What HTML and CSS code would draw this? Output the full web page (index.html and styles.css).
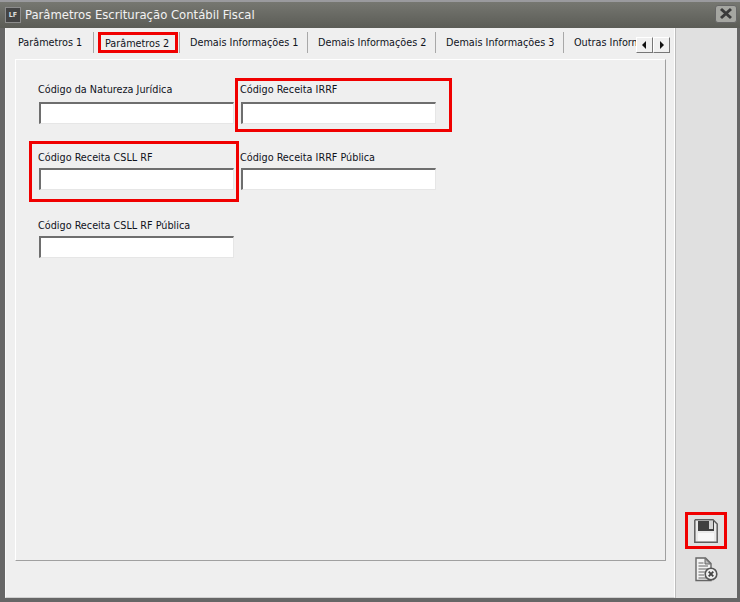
FILE: index.html
```html
<!DOCTYPE html>
<html lang="pt">
<head>
<meta charset="utf-8">
<title>Parâmetros Escrituração Contábil Fiscal</title>
<link rel="stylesheet" href="styles.css">
</head>
<body>
<div class="window">
  <header class="titlebar">
    <span class="appicon">LF</span>
    <span class="title">Parâmetros Escrituração Contábil Fiscal</span>
    <button class="close" aria-label="Fechar">
      <svg width="16" height="13" viewBox="0 0 16 13"><path d="M3 2 L13 11 M13 2 L3 11" stroke="#3a3a3a" stroke-width="3" fill="none"/></svg>
    </button>
  </header>
  <div class="content">
    <main class="main">
      <div class="tabstrip">
        <nav class="tabs">
          <span class="tab tab-first">Parâmetros 1</span>
          <span class="tab tab-active">Parâmetros 2</span>
          <span class="tab">Demais Informações 1</span>
          <span class="tab">Demais Informações 2</span>
          <span class="tab">Demais Informações 3</span>
          <span class="tab tab-last">Outras Informações</span>
        </nav>
        <div class="scroller">
          <span class="scroll-btn"><svg width="5" height="8" viewBox="0 0 5 8"><path d="M4 0V8L0 4Z" fill="#111"/></svg></span>
          <span class="scroll-btn"><svg width="5" height="8" viewBox="0 0 5 8"><path d="M1 0V8L5 4Z" fill="#111"/></svg></span>
        </div>
      </div>
      <section class="panel">
        <div class="field field-top">
          <label class="label">Código da Natureza Jurídica</label>
          <input class="input" type="text">
        </div>
        <div class="field field-top mark-irrf">
          <label class="label">Código Receita IRRF</label>
          <input class="input" type="text">
        </div>
        <div class="field mark-csll">
          <label class="label">Código Receita CSLL RF</label>
          <input class="input" type="text">
        </div>
        <div class="field">
          <label class="label">Código Receita IRRF Pública</label>
          <input class="input" type="text">
        </div>
        <div class="field">
          <label class="label">Código Receita CSLL RF Pública</label>
          <input class="input" type="text">
        </div>
      </section>
    </main>
    <aside class="sidebar">
      <span class="tool tool-save">
        <svg width="24" height="24" viewBox="0 0 24 24">
          <path d="M1.5 0.8H19L23.2 5V23.2H0.8V1.5Z" fill="#e9e9e9" stroke="#5e5e5e" stroke-width="1.5"/>
          <rect x="4" y="2" width="16" height="10" fill="#3f3f3f"/>
          <rect x="15" y="2" width="4" height="8" fill="#d4d4d4"/>
          <rect x="4" y="14" width="16" height="8" fill="#f7f7f7"/>
        </svg>
      </span>
      <span class="tool tool-cancel">
        <svg width="23" height="25" viewBox="0 0 23 25">
          <path d="M1 1H10.5L16 6.5V23.5H1Z" fill="#f2f2f2" stroke="#666" stroke-width="1.4"/>
          <path d="M10 1.5V7H15.5Z" fill="#bbb" stroke="#666"/>
          <path d="M3.5 6H8.5M3.5 9H13M3.5 12H13M3.5 15H10M3.5 18H9M3.5 21H11" stroke="#666" stroke-width="1.2"/>
          <circle cx="16" cy="17" r="5.8" fill="#efefef" stroke="#555" stroke-width="1.6"/>
          <path d="M13.7 14.7L18.3 19.3M18.3 14.7L13.7 19.3" stroke="#444" stroke-width="1.9"/>
        </svg>
      </span>
    </aside>
  </div>
</div>
</body>
</html>
```
FILE: styles.css
```css
*, *::before, *::after { box-sizing: border-box; }
html, body { margin: 0; padding: 0; }
body {
  width: 740px;
  height: 602px;
  overflow: hidden;
  background: #666;
  font-family: "DejaVu Sans", "Noto Sans", sans-serif;
  font-stretch: condensed;
  font-size: 10.75px;
  color: #10131c;
}
.window {
  display: flex;
  flex-direction: column;
  width: 740px;
  height: 602px;
  background: #666;
}
.titlebar {
  display: flex;
  align-items: center;
  flex: none;
  height: 28px;
  padding: 0 3px 0 5px;
  border-top: 2px solid #9a9a9e;
  background: linear-gradient(#767771, #5b5c56);
}
.appicon {
  display: flex;
  align-items: center;
  justify-content: center;
  width: 16px;
  height: 16px;
  margin-top: -1px;
  border: 1px solid #8c8c8c;
  background: #444;
  color: #ddd;
  font-size: 7px;
  font-weight: 700;
}
.title {
  margin-left: 4px;
  margin-top: -1px;
  font-size: 12.95px;
  color: #f2f2f2;
  white-space: nowrap;
}
.close {
  display: flex;
  align-items: center;
  justify-content: center;
  margin-left: auto;
  margin-top: -3px;
  width: 22px;
  height: 18px;
  padding: 0;
  border: 1px solid #666;
  border-radius: 3px;
  background: #a5a6a1;
}
.content {
  display: flex;
  flex: 1;
  min-height: 0;
  margin: 0 3px 4px 5px;
  background: #efefef;
}
.main {
  display: flex;
  flex-direction: column;
  flex: none;
  width: 670px;
  padding: 4px 0 0 0;
  border-left: 1px solid #f8f8f8;
  border-right: 1px solid #fff;
  border-bottom: 1px solid #d0d0d0;
}
.tabstrip {
  display: flex;
  flex: none;
  height: 21px;
}
.tabs {
  display: flex;
  flex: none;
  width: 630px;
  overflow: hidden;
}
.tab {
  flex: none;
  display: flex;
  align-items: center;
  width: 128px;
  height: 21px;
  padding: 0 0 1px 10px;
  border-right: 1px solid #a8a8a8;
  white-space: nowrap;
}
.tab-first { width: 88px; padding-left: 12px; }
.tab-active {
  position: relative;
  width: 86px;
  padding: 2px 0 0 11px;
}
.tab-active::after {
  content: "";
  position: absolute;
  left: 4px;
  top: 0;
  width: 80px;
  height: 21px;
  border: 3px solid #f00000;
}
.tab-last { width: auto; border-right: 0; }
.scroller {
  display: flex;
  align-self: flex-end;
  height: 16px;
}
.scroll-btn {
  display: flex;
  align-items: center;
  justify-content: center;
  width: 17px;
  height: 16px;
  background: #f0f0f0;
  border-top: 1px solid #fff;
  border-left: 1px solid #fff;
  border-right: 1px solid #777;
  border-bottom: 1px solid #777;
}
.panel {
  display: grid;
  grid-template-columns: 202px 202px;
  grid-auto-rows: 68px;
  align-content: start;
  width: 651px;
  height: 502px;
  margin: 6px 0 0 9px;
  padding: 21px 0 0 23px;
  background: #efefef;
  border-top: 1px solid #fff;
  border-left: 1px solid #fff;
  border-right: 1px solid #a0a0a0;
  border-bottom: 1px solid #a0a0a0;
}
.field {
  position: relative;
  display: flex;
  flex-direction: column;
}
.label {
  display: block;
  height: 19px;
  line-height: 17px;
  margin-left: -1px;
  white-space: nowrap;
}
.field-top .label { height: 21px; }
.input {
  display: block;
  width: 195px;
  height: 22px;
  padding: 0;
  background: #fff;
  border-top: 2px solid #6e6e6e;
  border-left: 2px solid #6e6e6e;
  border-right: 1px solid #e6e6e6;
  border-bottom: 1px solid #e6e6e6;
  outline: none;
}
.mark-irrf::after,
.mark-csll::after {
  content: "";
  position: absolute;
  border: 3px solid #f00000;
  pointer-events: none;
}
.mark-irrf::after { left: -6px; top: -3px; width: 217px; height: 54px; }
.mark-csll::after { left: -10px; top: -8px; width: 210px; height: 61px; }
.sidebar {
  display: flex;
  flex-direction: column;
  align-items: center;
  justify-content: flex-end;
  flex: 1;
  padding: 0 0 16px 0;
  background: #e0e0e0;
  border-left: 1px solid #bdbdbd;
}
.tool {
  display: flex;
  align-items: center;
  justify-content: center;
}
.tool-save {
  width: 42px;
  height: 37px;
  margin-bottom: 8px;
  margin-left: -1px;
  border: 3px solid #f00000;
}
.tool-cancel {
  width: 23px;
  height: 25px;
}
```
